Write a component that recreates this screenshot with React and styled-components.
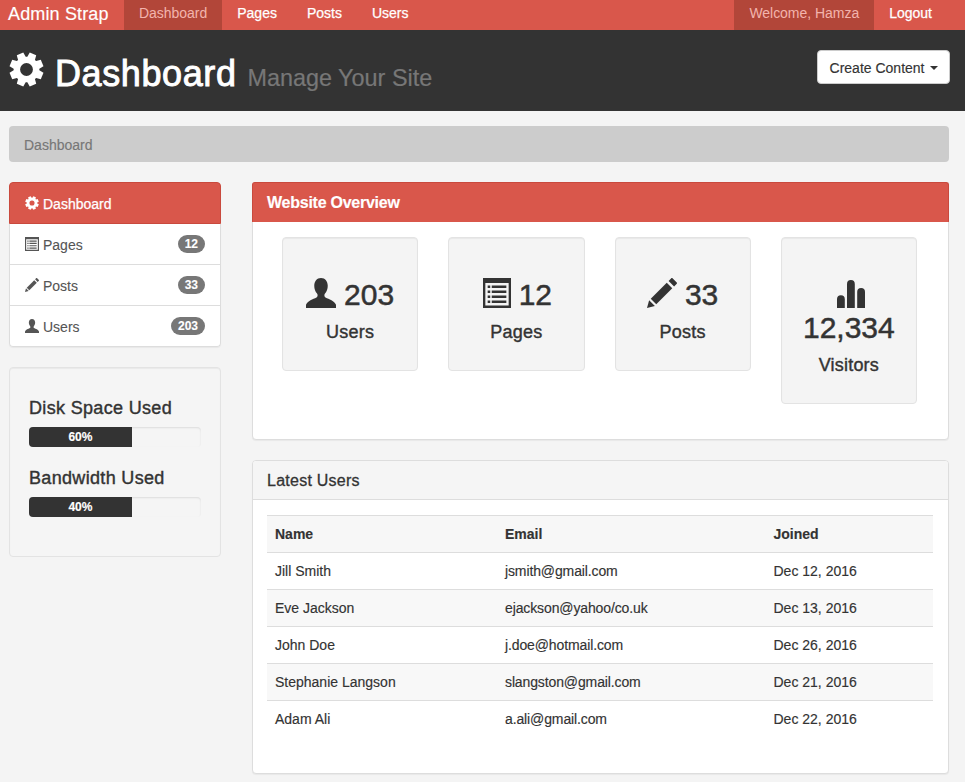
import React from 'react';
import styled, { createGlobalStyle } from 'styled-components';

const Global = createGlobalStyle`
  html, body { margin: 0; padding: 0; background: #f4f4f4; }
  body { font-family: "Liberation Sans", Arial, sans-serif; font-size: 14px; line-height: 20px; color: #333; -webkit-text-stroke: .15px; }
  * { box-sizing: border-box; }
`;

const RED = '#d9574b';
const RED_DARK = '#b24639';

const Navbar = styled.nav`
  display: flex; align-items: stretch; height: 30px; background: ${RED};
  padding: 0 18px 0 8px; color: #fff;
`;
const Brand = styled.a`
  font-size: 18px; line-height: 28px; width: 116px; letter-spacing: .15px;
`;
const NavList = styled.div`
  display: flex; margin-left: ${p => (p.$right ? 'auto' : '0')};
`;
const NavItem = styled.a`
  padding: 0 15px; line-height: 27px; font-size: 14px;
  background: ${p => (p.$active ? RED_DARK : 'transparent')};
  color: ${p => (p.$active ? '#f2b4ad' : '#fff')};
  letter-spacing: ${p => (p.$active ? '-.03px' : '0')};
  -webkit-text-stroke: ${p => (p.$active ? '0' : '0.25px')};
`;

const Header = styled.header`
  display: flex; justify-content: space-between; align-items: flex-start;
  height: 81px; background: #333; padding: 20px 15px 0 9px;
`;
const Title = styled.h1`
  margin: 0; padding-top: 1px; display: flex; align-items: baseline; color: #fff; font-size: 36px; line-height: 46px;
  font-weight: 400; -webkit-text-stroke: .9px #fff; letter-spacing: .6px;
`;
const TitleIcon = styled.span`
  display: inline-flex; width: 46px; height: 35px; align-self: flex-start; margin-top: 1px;
  svg { width: 35px; height: 35px; }
`;
const Small = styled.small`
  font-size: 23.4px; color: #777; font-weight: 400; margin-left: 11px; letter-spacing: 0;
  -webkit-text-stroke: .2px #777;
`;
const DropButton = styled.button`
  display: flex; align-items: center; gap: 5px; height: 34px; padding: 1px 11.5px 0 12px;
  background: #fff; border: 1px solid #ccc; border-radius: 4px; color: #333;
  font: 14px/20px "Liberation Sans", Arial, sans-serif; -webkit-text-stroke: .15px;
`;
const Caret = styled.span`
  width: 0; height: 0; border-top: 4px solid #333; border-left: 4px solid transparent; border-right: 4px solid transparent;
`;

const Content = styled.div`padding: 15px 16px 0 9px;`;
const Breadcrumb = styled.div`
  height: 36px; padding: 9px 15px 0; background: #ccc; border-radius: 4px; color: #777; margin-bottom: 20px;
`;
const Columns = styled.div`display: flex; gap: 31px; align-items: flex-start;`;
const Sidebar = styled.aside`width: 211.5px; flex: none;`;
const Main = styled.main`flex: 1; min-width: 0;`;

const ListGroup = styled.div`margin-bottom: 20px; background: #fff; border-radius: 4px; box-shadow: 0 1px 1px rgba(0,0,0,.05);`;
const ListItem = styled.a`
  display: flex; align-items: center; height: ${p => (p.$active ? '42px' : '41px')}; padding: 0 15px;
  background: ${p => (p.$active ? RED : '#fff')};
  color: ${p => (p.$active ? '#fff' : '#555')};
  border: 1px solid ${p => (p.$active ? '#c9493d' : '#ddd')};
  border-top-width: ${p => (p.$active ? '1px' : '0')};
  border-radius: ${p => (p.$active ? '4px 4px 0 0' : p.$last ? '0 0 4px 4px' : '0')};
  -webkit-text-stroke: ${p => (p.$active ? '0.25px' : '.1px')};
`;
const ItemIcon = styled.span`
  display: inline-flex; width: 14px; height: 14px; flex: none; margin-right: 4px;
`;
const ItemLabel = styled.span`padding-top: 2px;`;
const Badge = styled.span`
  margin-left: auto; min-width: 10px; height: 18px; padding: 0 6.5px; border-radius: 10px;
  background: #777; color: #fff; font-size: 12px; font-weight: 700; line-height: 18px;
`;

const Well = styled.div`
  background: #f5f5f5; border: 1px solid #e3e3e3; border-radius: 4px; padding: 29px 19px 39px;
  box-shadow: inset 0 1px 1px rgba(0,0,0,.05);
`;
const MeterTitle = styled.h4`
  margin: 0 0 8px; font-size: 18px; line-height: 22px; font-weight: 400; -webkit-text-stroke: .4px #333; letter-spacing: .33px;
`;
const Progress = styled.div`
  height: 20px; border-radius: 4px; background: #f5f5f5; overflow: hidden; margin-bottom: 20px;
  box-shadow: inset 0 1px 2px rgba(0,0,0,.1);
  &:last-child { margin-bottom: 0; }
`;
const ProgressFill = styled.div`
  height: 100%; background: #333; color: #fff; font-size: 12px; font-weight: 700; line-height: 20px; text-align: center;
`;

const Panel = styled.section`
  background: #fff; border: 1px solid #ddd; border-radius: 4px; margin-bottom: 20px;
  box-shadow: 0 1px 1px rgba(0,0,0,.05);
`;
const PanelHeading = styled.div`
  height: 39px; padding: 0 14.5px; font-size: 16px; line-height: 39px; letter-spacing: .25px;
  background: #f5f5f5; color: #333; font-weight: 400;
  border-bottom: 1px solid #ddd; border-radius: 3px 3px 0 0;
  -webkit-text-stroke: .3px #333;
`;
const MainHeading = styled.div`
  height: 40px; margin: -1px -1px 0; padding: 0 14.5px; font-size: 16px; line-height: 40px;
  background: ${RED}; color: #fff; font-weight: 700; letter-spacing: -.25px;
  border: 1px solid #c9493d; border-bottom-color: ${RED}; border-radius: 3px 3px 0 0;
`;
const StatsGrid = styled.div`
  display: grid; grid-template-columns: repeat(4, 1fr); gap: 30px; align-items: start;
  padding: 15px 31px 35px 29.5px;
`;
const StatBox = styled.div`
  background: #f4f4f4; border: 1px solid #e3e3e3; border-radius: 4px; padding: 40px 10px 28px; text-align: center;
  box-shadow: inset 0 1px 1px rgba(0,0,0,.05);
`;
const StatValue = styled.h2`
  margin: 0 0 11px; font-size: 30px; line-height: 33px; font-weight: 400; -webkit-text-stroke: .5px #333;
`;
const StatIcon = styled.span`
  display: inline-block; width: ${p => p.$w}px; height: 30px; vertical-align: -3px;
  margin-left: ${p => p.$nudge || 0}px;
  margin-right: ${p => (p.$solo ? '0' : '8px')};
`;
const StatLabel = styled.h4`
  margin: 0; font-size: 18px; line-height: 20px; font-weight: 400; -webkit-text-stroke: .4px #333; letter-spacing: .2px;
`;

const PanelBody = styled.div`padding: 15px 15.5px 35px 14.5px;`;
const Table = styled.table`
  width: 100%; border-collapse: collapse; table-layout: fixed;
`;
const Th = styled.th`
  text-align: left; padding: 8px; height: 37px; border-top: 1px solid #ddd; border-bottom: 1px solid #ddd; background: #f7f7f7; font-weight: 700;
  width: ${p => p.$w};
`;
const Tr = styled.tr`
  background: ${p => (p.$odd ? '#f8f8f8' : '#fff')};
`;
const Td = styled.td`
  padding: 8px; height: 37px; border-top: 1px solid #ddd;
  letter-spacing: ${p => (p.$tight ? '-.12px' : '0')};
`;

const Gear = ({ color = '#fff' }) => (
  <svg width="100%" height="100%" viewBox="0 0 24 24" fill={color}>
    {[0, 45, 90, 135, 180, 225, 270, 315].map(a => (
      <path key={a} transform={`rotate(${a + 22.5} 12 12)`} d="M9.6 .4 L14.4 .4 L15 5 L9 5 Z" />
    ))}
    <path fillRule="evenodd" d="M12 3.2a8.8 8.8 0 1 0 0 17.6a8.8 8.8 0 1 0 0-17.6ZM12 7.6a4.4 4.4 0 1 1 0 8.8a4.4 4.4 0 1 1 0-8.8Z" />
  </svg>
);
const UserIcon = ({ color = '#333' }) => (
  <svg width="100%" height="100%" viewBox="0 0 24 24" fill={color}>
    <path d="M12 0C8.6 0 6.6 2.8 6.6 6.2c0 2.5.8 4.7 2.2 6.1.8.9.6 2.6-.4 3.2C5.6 17 1.2 18 0 21.4V24h24v-2.6c-1.200-3.400-5.600-4.400-8.400-5.900-1-.6-1.200-2.300-.4-3.200 1.400-1.400 2.200-3.600 2.200-6.100C17.400 2.800 15.400 0 12 0Z" />
  </svg>
);
const ListIcon = ({ color = '#333' }) => (
  <svg width="100%" height="100%" viewBox="0 0 24 24" fill={color} preserveAspectRatio="none">
    <path fillRule="evenodd" d="M0 0H24V24H0ZM2 4V22H22V4Z" />
    <path d="M4 6h2.200v2H4zM7.500 6H20v2H7.500zM4 10h2.200v2H4zM7.500 10H20v2H7.500zM4 14h2.200v2H4zM7.500 14H20v2H7.500zM4 18h2.200v2H4zM7.500 18H20v2H7.500z" />
  </svg>
);
const PencilIcon = ({ color = '#333' }) => (
  <svg width="100%" height="100%" viewBox="0 0 24 24" fill={color}>
    <path d="M0 24l1.700-6.300 4.600 4.600Z" />
    <path d="M3 16.600 15.800 3.800l4.400 4.400L7.400 21Z" />
    <path d="M17.300 2.300 19.400.2c.3-.3.7-.3 1 0l3.400 3.400c.3.3.3.7 0 1L21.700 6.700Z" />
  </svg>
);
const StatsIcon = ({ color = '#333' }) => (
  <svg width="100%" height="100%" viewBox="0 -2 28 30" fill={color}>
    <path d="M0 28V19.200a3.900 3.900 0 0 1 7.800 0V28Z" />
    <path d="M10 28V3.900a3.900 3.900 0 0 1 7.800 0V28Z" />
    <path d="M20.200 28V11.900a3.900 3.900 0 0 1 7.800 0V28Z" />
  </svg>
);

const sideItems = [
  { icon: <ListIcon color="#555" />, label: 'Pages', n: 12 },
  { icon: <PencilIcon color="#555" />, label: 'Posts', n: 33 },
  { icon: <UserIcon color="#555" />, label: 'Users', n: 203 },
];
const stats = [
  { icon: <UserIcon />, w: 30, value: '203', label: 'Users' },
  { icon: <ListIcon />, w: 28, nudge: 2, value: '12', label: 'Pages' },
  { icon: <PencilIcon />, w: 30, value: '33', label: 'Posts' },
  { icon: <StatsIcon />, w: 28, nudge: 3.5, solo: true, value: '12,334', label: 'Visitors' },
];
const users = [
  ['Jill Smith', 'jsmith@gmail.com', 'Dec 12, 2016'],
  ['Eve Jackson', 'ejackson@yahoo/co.uk', 'Dec 13, 2016'],
  ['John Doe', 'j.doe@hotmail.com', 'Dec 26, 2016'],
  ['Stephanie Langson', 'slangston@gmail.com', 'Dec 21, 2016'],
  ['Adam Ali', 'a.ali@gmail.com', 'Dec 22, 2016'],
];

export default function App() {
  return (
    <>
      <Global />
      <Navbar>
        <Brand>Admin Strap</Brand>
        <NavList>
          <NavItem $active>Dashboard</NavItem>
          <NavItem>Pages</NavItem>
          <NavItem>Posts</NavItem>
          <NavItem>Users</NavItem>
        </NavList>
        <NavList $right>
          <NavItem $active>Welcome, Hamza</NavItem>
          <NavItem>Logout</NavItem>
        </NavList>
      </Navbar>
      <Header>
        <Title>
          <TitleIcon><Gear /></TitleIcon>
          Dashboard
          <Small>Manage Your Site</Small>
        </Title>
        <DropButton>Create Content <Caret /></DropButton>
      </Header>
      <Content>
        <Breadcrumb>Dashboard</Breadcrumb>
        <Columns>
          <Sidebar>
            <ListGroup>
              <ListItem $active><ItemIcon><Gear /></ItemIcon><ItemLabel>Dashboard</ItemLabel></ListItem>
              {sideItems.map((it, i) => (
                <ListItem key={it.label} $last={i === sideItems.length - 1}>
                  <ItemIcon>{it.icon}</ItemIcon><ItemLabel>{it.label}</ItemLabel><Badge>{it.n}</Badge>
                </ListItem>
              ))}
            </ListGroup>
            <Well>
              <MeterTitle>Disk Space Used</MeterTitle>
              <Progress><ProgressFill style={{ width: '60%' }}>60%</ProgressFill></Progress>
              <MeterTitle>Bandwidth Used</MeterTitle>
              <Progress><ProgressFill style={{ width: '60%' }}>40%</ProgressFill></Progress>
            </Well>
          </Sidebar>
          <Main>
            <Panel>
              <MainHeading>Website Overview</MainHeading>
              <StatsGrid>
                {stats.map(s => (
                  <StatBox key={s.label}>
                    <StatValue><StatIcon $w={s.w} $nudge={s.nudge} $solo={s.solo}>{s.icon}</StatIcon>{s.value}</StatValue>
                    <StatLabel>{s.label}</StatLabel>
                  </StatBox>
                ))}
              </StatsGrid>
            </Panel>
            <Panel>
              <PanelHeading>Latest Users</PanelHeading>
              <PanelBody>
                <Table>
                  <thead>
                    <tr><Th $w="230px">Name</Th><Th $w="268.500px">Email</Th><Th>Joined</Th></tr>
                  </thead>
                  <tbody>
                    {users.map((u, i) => (
                      <Tr key={u[0]} $odd={i % 2 === 1}>
                        <Td>{u[0]}</Td>
                        <Td $tight>{u[1]}</Td>
                        <Td>{u[2]}</Td>
                      </Tr>
                    ))}
                  </tbody>
                </Table>
              </PanelBody>
            </Panel>
          </Main>
        </Columns>
      </Content>
    </>
  );
}
